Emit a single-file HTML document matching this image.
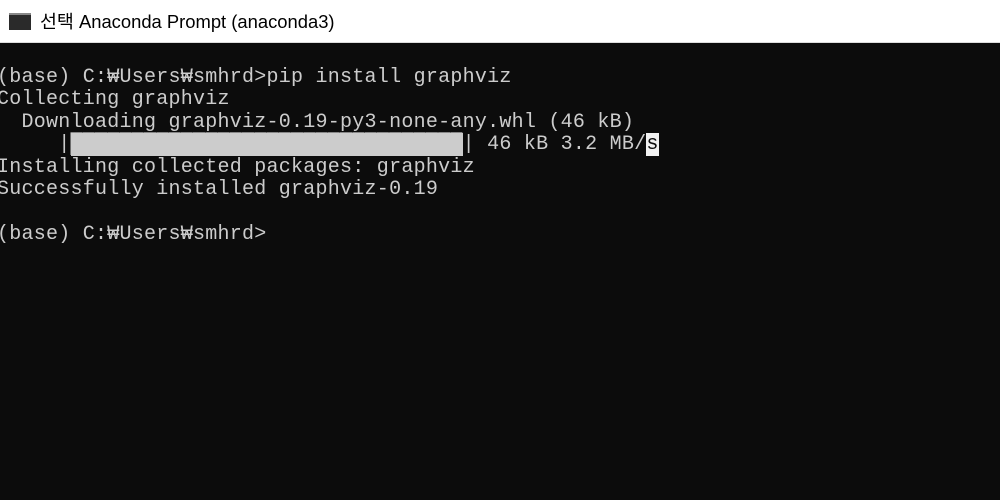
<!DOCTYPE html>
<html><head><meta charset="utf-8"><style>
body{margin:0;width:1000px;height:500px;overflow:hidden;background:#0c0c0c;position:relative}
.title{position:absolute;left:0;top:0;width:1000px;height:42px;background:#fff;border-bottom:1px solid #ddd}
.title span{position:absolute;left:40px;top:8px;font:18.4px "Liberation Sans","Noto Sans CJK KR",sans-serif;color:#000}
.icon{position:absolute;left:9px;top:13px;width:22px;height:15px;background:#2a2a2a;border-top:2px solid #888}
pre{position:absolute;left:-3px;top:67px;margin:0;font:20px/22.4px "Liberation Mono","Noto Sans CJK KR",monospace;letter-spacing:0.25px;color:#cccccc}
.bar{background:#cccccc;color:#cccccc}
.hl{background:#f2f2f2;color:#0c0c0c}
</style></head><body>
<div class="title"><div class="icon"></div><span>선택 Anaconda Prompt (anaconda3)</span></div>
<pre>(base) C:₩Users₩smhrd>pip install graphviz
Collecting graphviz
  Downloading graphviz-0.19-py3-none-any.whl (46 kB)
     |<span class="bar">████████████████████████████████</span>| 46 kB 3.2 MB/<span class="hl">s</span>
Installing collected packages: graphviz
Successfully installed graphviz-0.19

(base) C:₩Users₩smhrd></pre>
</body></html>
